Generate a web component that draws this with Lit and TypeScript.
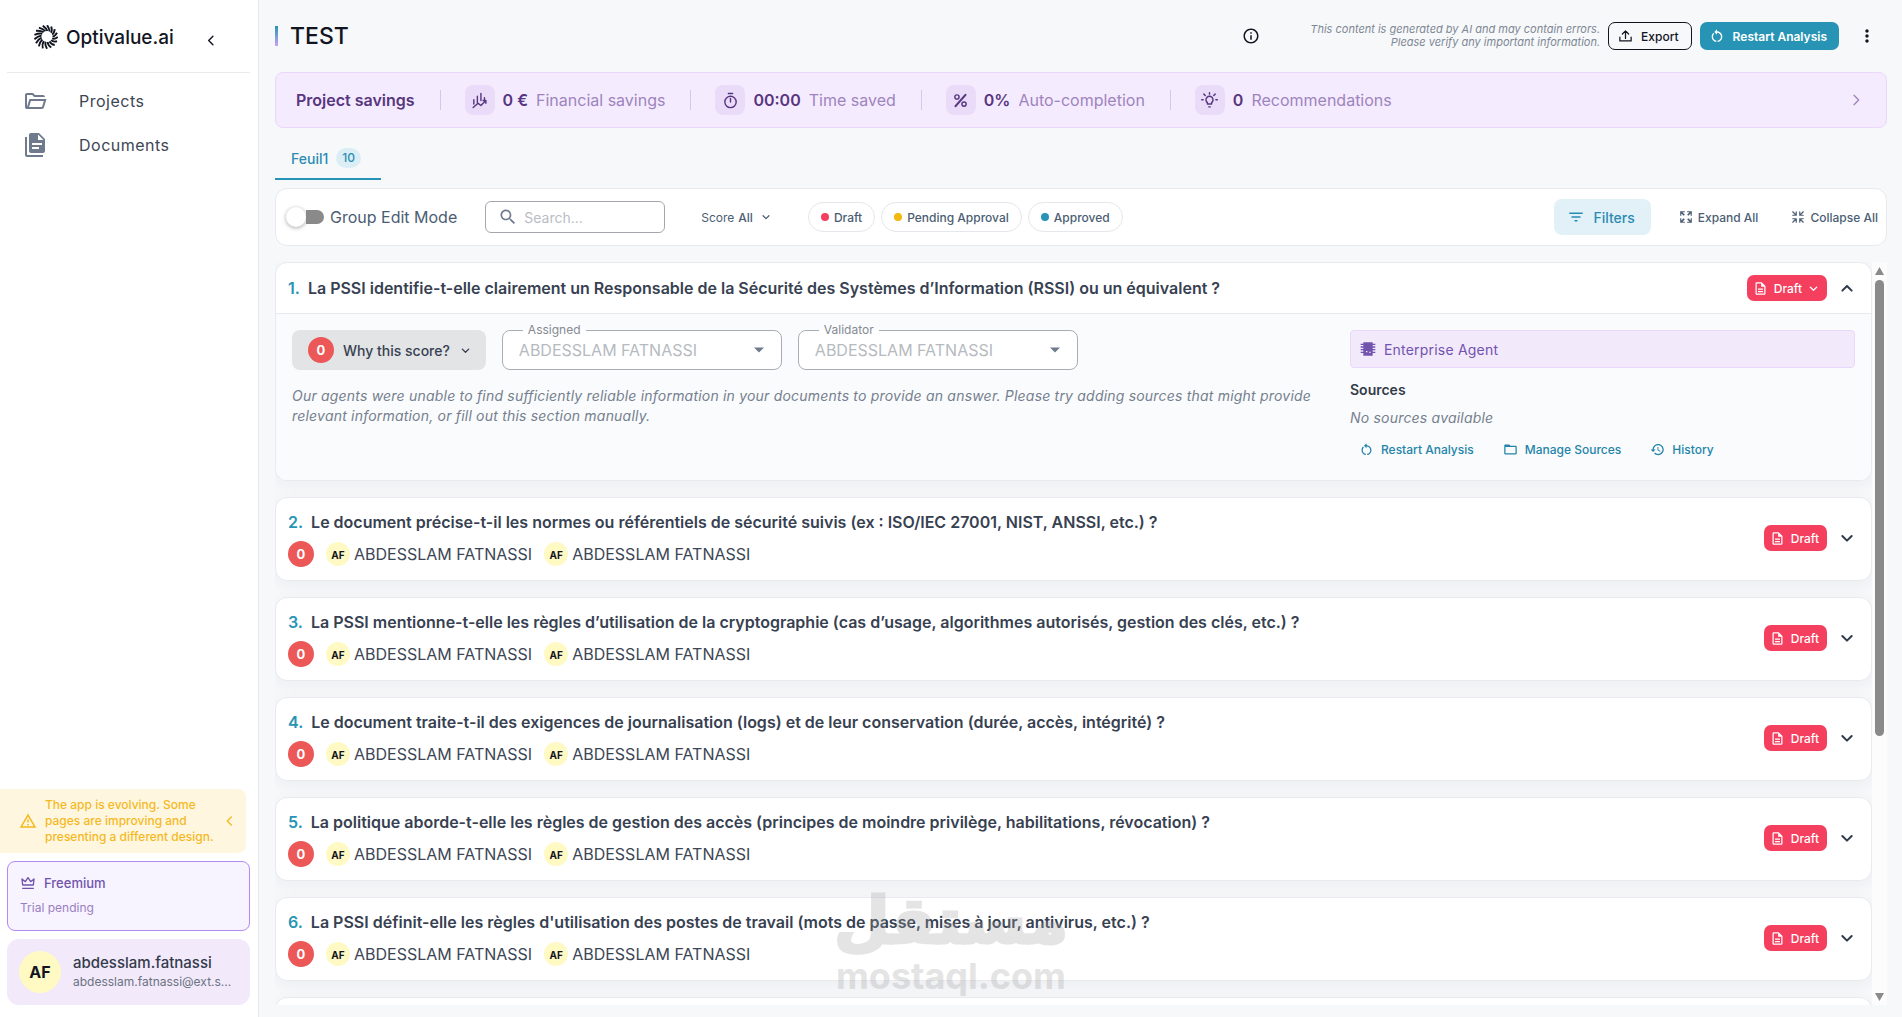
import { LitElement, html, svg, css, nothing } from "lit";
import { customElement, property, state } from "lit/decorators.js";

const filled = (d: string) => svg`<path d=${d} fill="currentColor" fill-rule="evenodd"></path>`;
const stroked = (d: string, w = 2) =>
  svg`<path d=${d} fill="none" stroke="currentColor" stroke-width=${w} stroke-linecap="round" stroke-linejoin="round"></path>`;

const ICONS: Record<string, unknown> = {
  folderOpen: filled(
    "M4 20q-.825 0-1.412-.587T2 18V6q0-.825.588-1.412T4 4h6l2 2h8q.825 0 1.413.588T22 8H11.175l-2-2H4v12l2.4-8h17.1l-2.575 8.575q-.2.65-.737 1.038T19 20zm2.1-2H19l1.8-6H7.9z"
  ),
  documents: filled(
    "M16 0H8C6.9 0 6 .9 6 2V18C6 19.1 6.9 20 8 20H20C21.1 20 22 19.1 22 18V6ZM19 12H9V10H19ZM16 16H9V14H16ZM15 7V1.5L20.5 7ZM4 4V22H20V24H4C2.9 24 2 23.1 2 22V4Z"
  ),
  warning: filled(
    "M12 5.99L19.53 19H4.47L12 5.99M12 2L1 21h22L12 2zm1 14h-2v2h2v-2zm0-6h-2v4h2v-4z"
  ),
  crown: stroked("M4 15 3 6l5 4 4-6 4 6 5-4-1 9zM4 20h16"),
  info: filled(
    "M11 7h2v2h-2zm0 4h2v6h-2zm1-9C6.48 2 2 6.48 2 12s4.48 10 10 10 10-4.48 10-10S17.52 2 12 2zm0 18c-4.41 0-8-3.59-8-8s3.59-8 8-8 8 3.59 8 8-3.59 8-8 8z"
  ),
  upload: stroked("M12 15V3M7 8l5-5 5 5M3 13v6h18v-6"),
  restart: filled(
    "M12 5V2L8 6l4 4V7c3.31 0 6 2.69 6 6 0 2.97-2.17 5.43-5 5.91v2.02c3.95-.49 7-3.85 7-7.93 0-4.42-3.58-8-8-8zm-6 8c0-1.65.67-3.15 1.76-4.24L6.34 7.34C4.9 8.79 4 10.79 4 13c0 4.08 3.05 7.44 7 7.93v-2.02c-2.83-.48-5-2.94-5-5.91z"
  ),
  more: filled(
    "M12 8c1.1 0 2-.9 2-2s-.9-2-2-2-2 .9-2 2 .9 2 2 2zm0 2c-1.1 0-2 .9-2 2s.9 2 2 2 2-.9 2-2-.9-2-2-2zm0 6c-1.1 0-2 .9-2 2s.9 2 2 2 2-.9 2-2-.9-2-2-2z"
  ),
  finance: stroked("M4 11v6M9 6v9M14 2v10M19 8v3M3 22l7-6 4 3 7-7M17 12h4v4", 2),
  timer: svg`${stroked("M9 2h6M12 9v5")}<circle cx="12" cy="14" r="8" fill="none" stroke="currentColor" stroke-width="2"></circle>`,
  percent: svg`${stroked("M19 4 5 20", 3)}<circle cx="7" cy="7" r="3" fill="none" stroke="currentColor" stroke-width="2"></circle><circle cx="17" cy="17" r="3" fill="none" stroke="currentColor" stroke-width="2"></circle>`,
  bulb: stroked("M9 17v-2a5 5 0 1 1 6 0v2zM11 21h2M12 1v2M4 3l2 2M20 3l-2 2M1 11h2M21 11h2", 2),
  search: filled(
    "M15.5 14h-.79l-.28-.27C15.41 12.59 16 11.11 16 9.5 16 5.91 13.09 3 9.5 3S3 5.91 3 9.5 5.91 16 9.5 16c1.61 0 3.09-.59 4.23-1.57l.27.28v.79l5 4.99L20.49 19l-4.99-5zm-6 0C7.01 14 5 11.99 5 9.5S7.01 5 9.5 5 14 7.01 14 9.5 11.99 14 9.5 14z"
  ),
  filter: filled("M10 18h4v-2h-4v2zM3 6v2h18V6H3zm3 7h12v-2H6v2z"),
  expand: filled(
    "M14 2h8v8h-2V6l-4 4-2-2 4-4h-4zM10 2v2H6l4 4-2 2-4-4v4H2V2zM2 14h2v4l4-4 2 2-4 4h4v2H2zM22 14v8h-8v-2h4l-4-4 2-2 4 4v-4z"
  ),
  collapse: stroked("M3 3l6 6M9 3v6H3M21 3l-6 6M15 3v6h6M3 21l6-6M9 21v-6H3M21 21l-6-6M15 21v-6h6", 2),
  doc: filled(
    "M8 16h8v2H8zm0-4h8v2H8zm6-10H6c-1.1 0-2 .9-2 2v16c0 1.1.89 2 1.99 2H18c1.1 0 2-.9 2-2V8l-6-6zm4 18H6V4h7v5h5v11z"
  ),
  chip: filled(
    "M5 2h14v2h4v2h-4v2h4v2h-4v2h4v2h-4v2h4v2h-4v4H5v-4H1v-2h4v-2H1v-2h4v-2H1V8h4V6H1V4h4zM9 15v2h2v-2zM14 16v2h2v-2z"
  ),
  folder: filled(
    "M20 6h-8l-2-2H4c-1.1 0-1.99.9-1.99 2L2 18c0 1.1.9 2 2 2h16c1.1 0 2-.9 2-2V8c0-1.1-.9-2-2-2zm0 12H4V8h16v10z"
  ),
  history: filled(
    "M13 3c-4.97 0-9 4.03-9 9H1l3.89 3.89.07.14L9 12H6c0-3.87 3.13-7 7-7s7 3.13 7 7-3.13 7-7 7c-1.93 0-3.68-.79-4.94-2.06l-1.42 1.42C8.27 19.99 10.51 21 13 21c4.97 0 9-4.03 9-9s-4.03-9-9-9zm-1 5v5l4.28 2.54.72-1.21-3.5-2.08V8H12z"
  ),
  left: stroked("M14 6l-6 6 6 6", 2),
  right: stroked("M9 5l7 7-7 7", 2),
  down: stroked("M5 9l7 7 7-7", 3),
  up: stroked("M5 16l7-7 7 7", 3),
  caret: filled("M6 9h12l-6 6z"),
};

const icon = (name: string, size: number) =>
  html`<svg class="icon" width=${size} height=${size} viewBox="0 0 24 24" aria-hidden="true">${ICONS[name]}</svg>`;

const shared = css`
  * {
    box-sizing: border-box;
  }
  button,
  input,
  select {
    font: inherit;
    color: inherit;
    margin: 0;
    border: 0;
    padding: 0;
    background: none;
  }
  .icon {
    display: block;
    flex: none;
  }
  .score {
    display: grid;
    place-items: center;
    flex: none;
    width: 26px;
    height: 26px;
    border-radius: 50%;
    background: #ec5757;
    color: #fff;
    font-size: 13px;
    font-weight: 700;
  }
`;

interface Question {
  id: number;
  title: string;
}

const QUESTIONS: Question[] = [
  { id: 1, title: "La PSSI identifie-t-elle clairement un Responsable de la Sécurité des Systèmes d’Information (RSSI) ou un équivalent ?" },
  { id: 2, title: "Le document précise-t-il les normes ou référentiels de sécurité suivis (ex : ISO/IEC 27001, NIST, ANSSI, etc.) ?" },
  { id: 3, title: "La PSSI mentionne-t-elle les règles d’utilisation de la cryptographie (cas d’usage, algorithmes autorisés, gestion des clés, etc.) ?" },
  { id: 4, title: "Le document traite-t-il des exigences de journalisation (logs) et de leur conservation (durée, accès, intégrité) ?" },
  { id: 5, title: "La politique aborde-t-elle les règles de gestion des accès (principes de moindre privilège, habilitations, révocation) ?" },
  { id: 6, title: "La PSSI définit-elle les règles d'utilisation des postes de travail (mots de passe, mises à jour, antivirus, etc.) ?" },
];

const USER = "ABDESSLAM FATNASSI";

@customElement("app-sidebar")
export class AppSidebar extends LitElement {
  static styles = [
    shared,
    css`
      :host {
        display: flex;
        flex-direction: column;
        background: #fff;
        border-right: 1px solid #e6e8ec;
        padding-bottom: 12px;
      }
      .brand {
        display: flex;
        align-items: center;
        gap: 8px;
        height: 73px;
        margin: 0 8px 0 7px;
        padding: 2px 30px 0 27px;
        border-bottom: 1px solid #e8eaed;
        color: #12151f;
        font-size: 19px;
        font-weight: 500;
      }
      .name {
        flex: 1;
      }
      .fold {
        color: #12151f;
        padding-top: 6px;
      }
      nav {
        flex: 1;
        padding-top: 6px;
      }
      nav a {
        display: flex;
        align-items: center;
        gap: 32px;
        height: 44px;
        padding-left: 23px;
        color: #3c4654;
        font-size: 16px;
        letter-spacing: 0.5px;
        text-decoration: none;
      }
      nav .icon {
        color: #6f7b8c;
      }
      .notice {
        display: flex;
        align-items: center;
        gap: 8px;
        margin: 0 12px 8px 0;
        padding: 8px 16px 8px 19px;
        border-radius: 0 8px 8px 0;
        background: #fef6df;
        color: #f5b91f;
        font-size: 12px;
        line-height: 16px;
        font-weight: 500;
      }
      .notice p {
        flex: 1;
        margin: 0;
        white-space: nowrap;
      }
      .plan {
        display: flex;
        flex-direction: column;
        gap: 8px;
        margin: 0 8px 8px 7px;
        padding: 13px 12px;
        border: 1px solid #b18bf3;
        border-radius: 8px;
        background: #f7f3ff;
        color: #9a7fbf;
        font-size: 12px;
        line-height: 18px;
      }
      .tier {
        display: flex;
        align-items: center;
        gap: 8px;
        color: #7153ae;
        font-size: 13px;
        line-height: 16px;
        font-weight: 500;
      }
      .user {
        display: flex;
        align-items: center;
        gap: 12px;
        height: 66px;
        margin: 0 8px 0 7px;
        padding: 0 12px;
        border-radius: 12px;
        background: #f2e9fb;
        text-align: left;
      }
      .avatar {
        display: grid;
        place-items: center;
        flex: none;
        width: 42px;
        height: 42px;
        border-radius: 50%;
        background: #fff9c4;
        color: #12151f;
        font-size: 16px;
        font-weight: 700;
      }
      .who {
        min-width: 0;
        color: #6b7280;
        font-size: 12px;
        line-height: 18px;
      }
      .who b {
        display: block;
        color: #333b4a;
        font-size: 15px;
        line-height: 20px;
        font-weight: 500;
      }
      .mail {
        display: block;
        overflow: hidden;
        text-overflow: ellipsis;
        white-space: nowrap;
      }
    `,
  ];

  private rays() {
    const count = 17;
    return Array.from({ length: count }, (_, i) => {
      const a = (i / count) * Math.PI * 2;
      const at = (cx: number, cy: number, r: number, t: number) =>
        `${(cx + r * Math.cos(a + t)).toFixed(2)} ${(cy + r * Math.sin(a + t)).toFixed(2)}`;
      const d = `M${at(13, 11.5, 5.5, 0.35)}Q${at(12.5, 12, 8.5, 0.3)} ${at(12, 12, 11.8, 0)}`;
      return svg`<path d=${d} fill="none" stroke="currentColor" stroke-width="1.9"></path>`;
    });
  }

  render() {
    return html`
      <div class="brand">
        <svg class="icon" width="24" height="24" viewBox="0 0 24 24" aria-hidden="true">${this.rays()}</svg>
        <span class="name">Optivalue.ai</span>
        <button class="fold" aria-label="Collapse menu">${icon("left", 17)}</button>
      </div>
      <nav>
        <a href="#projects">${icon("folderOpen", 24)}Projects</a>
        <a href="#documents">${icon("documents", 24)}Documents</a>
      </nav>
      <div class="notice">
        ${icon("warning", 18)}
        <p>The app is evolving. Some<br />pages are improving and<br />presenting a different design.</p>
        <button aria-label="Hide notice">${icon("left", 16)}</button>
      </div>
      <div class="plan">
        <div class="tier">${icon("crown", 16)}Freemium</div>
        <div>Trial pending</div>
      </div>
      <button class="user">
        <span class="avatar">AF</span>
        <span class="who"><b>abdesslam.fatnassi</b><span class="mail">abdesslam.fatnassi@ext.s...</span></span>
      </button>
    `;
  }
}

@customElement("question-card")
export class QuestionCard extends LitElement {
  @property({ attribute: false }) question?: Question;
  @property({ type: Boolean }) open = false;

  static styles = [
    shared,
    css`
      :host {
        display: block;
        flex: none;
        min-height: 84px;
        border: 1px solid #e8eaee;
        border-radius: 12px;
        background: #fff;
        box-shadow: 0 4px 16px rgba(30, 41, 59, 0.05);
        overflow: hidden;
      }
      .head {
        display: flex;
        align-items: center;
        gap: 12px;
        padding: 12px 16px 12px 12px;
      }
      .closed {
        min-height: 82px;
        padding: 8px 16px 10px 12px;
      }
      .main {
        flex: 1;
      }
      h2 {
        display: flex;
        gap: 8px;
        margin: 0;
        color: #374151;
        font-size: 16px;
        line-height: 26px;
        font-weight: 600;
      }
      .num {
        color: #2794b5;
      }
      .people {
        display: flex;
        align-items: center;
        gap: 12px;
        margin-top: 6px;
        color: #3c4654;
        font-size: 16px;
        line-height: 26px;
      }
      .person {
        display: flex;
        align-items: center;
        gap: 4px;
      }
      .avatar {
        display: grid;
        place-items: center;
        width: 24px;
        height: 24px;
        border-radius: 50%;
        background: #fff9c4;
        color: #12151f;
        font-size: 10px;
        font-weight: 700;
      }
      .status {
        display: flex;
        align-items: center;
        gap: 6px;
        height: 26px;
        padding: 0 8px 0 6px;
        border-radius: 7px;
        background: #f43f5e;
        color: #fff;
        font-size: 12px;
        font-weight: 500;
      }
      .toggle {
        color: #2f3b4c;
      }
      .body {
        display: grid;
        grid-template-columns: repeat(12, 1fr);
        gap: 24px;
        padding: 16px;
        border-top: 1px solid #e8eaee;
        background: #fafbfd;
      }
      .answer {
        grid-column: span 8;
      }
      .aside {
        grid-column: span 4;
        min-height: 134px;
      }
      .controls {
        display: flex;
        gap: 16px;
      }
      .why {
        display: flex;
        align-items: center;
        gap: 9px;
        height: 40px;
        padding: 0 14px 0 16px;
        border-radius: 8px;
        background: #e2e4e6;
        color: #374151;
        font-size: 14px;
        font-weight: 500;
      }
      .why .icon {
        margin: 0 1px;
      }
      .field {
        position: relative;
        display: flex;
        align-items: center;
        flex: 0 1 280px;
        height: 40px;
        padding: 0 12px 0 16px;
        border: 1px solid #a9adb3;
        border-radius: 8px;
        background: #fff;
        color: #6f7b8c;
      }
      .field label {
        position: absolute;
        top: -9px;
        left: 20px;
        padding: 0 5px;
        background: linear-gradient(#fafbfd 50%, #fff 50%);
        color: #858a92;
        font-size: 12px;
        line-height: 16px;
      }
      .field select {
        flex: 1;
        appearance: none;
        color: #b6babf;
        opacity: 1;
        font-size: 16px;
      }
      .answer p {
        margin: 16px 0 0;
        color: #75808e;
        font-size: 14px;
        line-height: 20px;
        font-style: italic;
        letter-spacing: 0.2px;
      }
      .agent {
        display: flex;
        align-items: center;
        gap: 8px;
        height: 38px;
        padding: 0 9px;
        border: 1px solid #e9d8fb;
        border-radius: 4px;
        background: #f2e9fb;
        color: #7153ae;
        font-size: 14px;
        letter-spacing: 0.2px;
      }
      h3 {
        margin: 12px 0 8px;
        color: #333b4a;
        font-size: 14px;
        line-height: 20px;
        font-weight: 600;
      }
      .none {
        color: #75808e;
        font-size: 14px;
        line-height: 20px;
        font-style: italic;
        letter-spacing: 0.2px;
      }
      .links {
        display: flex;
        gap: 29px;
        margin-top: 9px;
        padding-left: 9px;
      }
      .links button {
        display: flex;
        align-items: center;
        gap: 7px;
        height: 24px;
        color: #2384a9;
        font-size: 12px;
        font-weight: 500;
      }
    `,
  ];

  private field(label: string) {
    const id = label.toLowerCase();
    return html`<div class="field">
      <label for=${id}>${label}</label>
      <select id=${id} disabled>
        <option>${USER}</option>
      </select>
      ${icon("caret", 20)}
    </div>`;
  }

  private body() {
    return html`<div class="body">
      <div class="answer">
        <div class="controls">
          <button class="why"><span class="score">0</span>Why this score? ${icon("down", 11)}</button>
          ${this.field("Assigned")} ${this.field("Validator")}
        </div>
        <p>
          Our agents were unable to find sufficiently reliable information in your documents to provide an answer. Please
          try adding sources that might provide relevant information, or fill out this section manually.
        </p>
      </div>
      <div class="aside">
        <div class="agent">${icon("chip", 16)}Enterprise Agent</div>
        <h3>Sources</h3>
        <div class="none">No sources available</div>
        <div class="links">
          <button>${icon("restart", 15)}Restart Analysis</button>
          <button>${icon("folder", 15)}Manage Sources</button>
          <button>${icon("history", 15)}History</button>
        </div>
      </div>
    </div>`;
  }

  render() {
    const q = this.question;
    if (!q) return nothing;
    const person = html`<span class="person"><span class="avatar">AF</span>${USER}</span>`;
    return html`
      <div class="head ${this.open ? "" : "closed"}">
        <div class="main">
          <h2><span class="num">${q.id}.</span>${q.title}</h2>
          ${this.open ? nothing : html`<div class="people"><span class="score">0</span>${person}${person}</div>`}
        </div>
        <button class="status">${icon("doc", 15)}Draft${this.open ? icon("down", 11) : nothing}</button>
        <button
          class="toggle"
          aria-label=${this.open ? "Collapse question" : "Expand question"}
          @click=${() => (this.open = !this.open)}
        >
          ${icon(this.open ? "up" : "down", 16)}
        </button>
      </div>
      ${this.open ? this.body() : nothing}
    `;
  }
}

@customElement("app-root")
export class AppRoot extends LitElement {
  @state() private groupEdit = false;

  static styles = [
    shared,
    css`
      :host {
        display: grid;
        grid-template-columns: 259px minmax(0, 1fr);
        height: 100vh;
        overflow: hidden;
        background: #f7f8fa;
        font-family: Inter, "Liberation Sans", sans-serif;
        color: #374151;
      }
      main {
        display: flex;
        flex-direction: column;
        min-height: 0;
        padding: 0 15px 12px 16px;
      }
      header {
        display: flex;
        align-items: center;
        flex: none;
        height: 72px;
      }
      .accent {
        width: 3px;
        height: 20px;
        margin-right: 12px;
        background: linear-gradient(#2794b5, #c9a2f8);
      }
      h1 {
        flex: 1;
        margin: 0;
        color: #12151f;
        font-size: 23px;
        line-height: 32px;
        font-weight: 500;
      }
      .plain {
        color: #12151f;
      }
      .disclaimer {
        margin: 0 8px 0 50px;
        color: #7d8794;
        font-size: 11px;
        line-height: 13px;
        font-style: italic;
        text-align: right;
      }
      .btn {
        display: flex;
        align-items: center;
        gap: 8px;
        height: 28px;
        padding: 0 12px 0 9px;
        border-radius: 7px;
        font-size: 12px;
        font-weight: 500;
      }
      .export {
        margin-right: 8px;
        border: 1px solid #12151f;
        color: #12151f;
      }
      .restart {
        margin-right: 18px;
        background: #2794b5;
        color: #fff;
        font-weight: 600;
      }
      .kebab {
        margin-right: 10px;
      }
      .savings {
        display: flex;
        align-items: center;
        flex: none;
        height: 56px;
        padding: 0 22px 0 20px;
        border: 1px solid #e9d8fb;
        border-radius: 8px;
        background: #f5ebfe;
        color: #9d84bd;
        font-size: 16px;
      }
      .savings b {
        color: #57367f;
        font-weight: 600;
      }
      .metric {
        display: flex;
        align-items: center;
        gap: 8px;
        margin-left: 25px;
      }
      .metric::before {
        content: "";
        width: 1px;
        height: 20px;
        margin-right: 16px;
        background: #d8c6ec;
      }
      .tile {
        display: grid;
        place-items: center;
        width: 30px;
        height: 30px;
        border-radius: 8px;
        background: #eadcf9;
        color: #57367f;
      }
      .more {
        margin-left: auto;
      }
      .tabs {
        display: flex;
        flex: none;
        height: 52px;
        margin-bottom: 8px;
      }
      .tab {
        display: flex;
        align-items: center;
        gap: 8px;
        padding: 10px 20px 0 16px;
        border-bottom: 2px solid #2794b5;
        color: #2b8cb3;
        font-size: 14px;
        font-weight: 500;
      }
      .count {
        padding: 0 6px;
        border-radius: 10px;
        background: #dceef5;
        font-size: 12px;
        line-height: 20px;
      }
      .toolbar {
        display: flex;
        align-items: center;
        flex: none;
        height: 58px;
        margin-bottom: 16px;
        padding: 0 8px 0 10px;
        border: 1px solid #e8eaee;
        border-radius: 12px;
        background: #fff;
        color: #4b5d73;
        font-size: 12px;
      }
      .group {
        display: flex;
        align-items: center;
        gap: 6px;
        margin-right: 28px;
        font-size: 16px;
      }
      .switch {
        appearance: none;
        display: flex;
        align-items: center;
        width: 38px;
        height: 20px;
      }
      .switch::before {
        content: "";
        width: 20px;
        height: 20px;
        border-radius: 50%;
        background: #fff;
        box-shadow: 0 1px 4px rgba(0, 0, 0, 0.35);
      }
      .switch::after {
        content: "";
        width: 18px;
        height: 14px;
        border-radius: 0 7px 7px 0;
        background: #8a8a8a;
      }
      .switch:checked::before {
        order: 1;
      }
      .switch:checked::after {
        border-radius: 7px 0 0 7px;
      }
      .search {
        display: flex;
        align-items: center;
        gap: 6px;
        width: 180px;
        height: 32px;
        margin-right: 36px;
        padding: 0 12px;
        border: 1px solid #a4a8ae;
        border-radius: 6px;
        color: #6f7b8c;
      }
      .search input {
        flex: 1;
        min-width: 0;
        outline: 0;
        font-size: 14px;
      }
      .search input::placeholder {
        color: #b9bdc3;
      }
      .scoresel {
        display: flex;
        align-items: center;
        gap: 4px;
        margin-right: 37px;
      }
      .scoresel b {
        margin-right: 4px;
        font-weight: 500;
      }
      .pill {
        display: flex;
        align-items: center;
        gap: 5px;
        height: 30px;
        margin-right: 6px;
        padding: 0 12px;
        border: 1px solid #e4e7eb;
        border-radius: 15px;
        background: #fff;
        font-weight: 500;
      }
      .dot {
        width: 8px;
        height: 8px;
        border-radius: 50%;
      }
      .draft {
        background: #f43f5e;
      }
      .pending {
        background: #f0b90b;
      }
      .approved {
        background: #2794b5;
      }
      .filters {
        display: flex;
        align-items: center;
        gap: 8px;
        height: 36px;
        margin: 0 28px 0 auto;
        padding: 0 16px 0 13px;
        border-radius: 8px;
        background: #e2f1f7;
        color: #2b8cb3;
        font-size: 14px;
        font-weight: 500;
      }
      .action {
        display: flex;
        align-items: center;
        gap: 5px;
        font-weight: 500;
      }
      .action + .action {
        margin-left: 33px;
      }
      .scroller {
        display: flex;
        flex: 1;
        min-height: 0;
      }
      .list {
        display: flex;
        flex: 1;
        flex-direction: column;
        gap: 16px;
        overflow-y: auto;
        scrollbar-width: none;
      }
      .bar {
        display: flex;
        flex-direction: column;
        align-items: center;
        width: 15px;
        padding: 5px 0 4px;
        background: #fcfcfc;
        color: #8a8a8a;
      }
      .thumb {
        width: 9px;
        flex: 457 0 0;
        margin-top: 5px;
        border-radius: 5px;
        background: #8a8a8a;
      }
      .rest {
        flex: 258 0 0;
      }
      .watermark {
        position: absolute;
        left: 50%;
        bottom: 20px;
        transform: translateX(-50%);
        display: flex;
        flex-direction: column;
        align-items: center;
        color: #a0a0a0;
        font-weight: 700;
        opacity: 0.28;
        pointer-events: none;
      }
      .arabic {
        font-family: "DejaVu Sans", sans-serif;
        font-size: 64px;
        line-height: 68px;
        -webkit-text-stroke: 3px #a0a0a0;
        stroke-linejoin: round;
      }
      .latin {
        font-size: 36px;
        line-height: 42px;
      }
    `,
  ];

  private metric(name: string, value: string, label: string) {
    return html`<div class="metric"><span class="tile">${icon(name, 17)}</span><b>${value}</b><span>${label}</span></div>`;
  }

  private pill(kind: string, label: string) {
    return html`<button class="pill"><span class="dot ${kind}"></span>${label}</button>`;
  }

  render() {
    return html`
      <app-sidebar></app-sidebar>
      <main>
        <header>
          <span class="accent"></span>
          <h1>TEST</h1>
          <button class="plain" aria-label="Information">${icon("info", 18)}</button>
          <p class="disclaimer">
            This content is generated by AI and may contain errors.<br />Please verify any important information.
          </p>
          <button class="btn export">${icon("upload", 15)}Export</button>
          <button class="btn restart">${icon("restart", 16)}Restart Analysis</button>
          <button class="plain kebab" aria-label="More options">${icon("more", 20)}</button>
        </header>
        <section class="savings">
          <b>Project savings</b>
          ${this.metric("finance", "0 €", "Financial savings")} ${this.metric("timer", "00:00", "Time saved")}
          ${this.metric("percent", "0%", "Auto-completion")} ${this.metric("bulb", "0", "Recommendations")}
          <button class="more" aria-label="Show savings">${icon("right", 16)}</button>
        </section>
        <div class="tabs"><button class="tab">Feuil1<span class="count">10</span></button></div>
        <section class="toolbar">
          <label class="group"
            ><input
              class="switch"
              type="checkbox"
              role="switch"
              .checked=${this.groupEdit}
              @change=${() => (this.groupEdit = !this.groupEdit)}
            />Group Edit Mode</label
          >
          <label class="search">${icon("search", 20)}<input type="text" aria-label="Search" placeholder="Search..." /></label>
          <button class="scoresel">Score <b>All</b> ${icon("down", 10)}</button>
          ${this.pill("draft", "Draft")}${this.pill("pending", "Pending Approval")}${this.pill("approved", "Approved")}
          <button class="filters">${icon("filter", 18)}Filters</button>
          <button class="action">${icon("expand", 14)}Expand All</button>
          <button class="action">${icon("collapse", 14)}Collapse All</button>
        </section>
        <div class="scroller">
          <div class="list">
            ${QUESTIONS.map((q) => html`<question-card .question=${q} ?open=${q.id === 1}></question-card>`)}
            <question-card></question-card>
          </div>
          <div class="bar" aria-hidden="true">
            <svg class="icon" width="9" height="8" viewBox="0 0 9 8"><path d="M4.5 0 9 8H0z" fill="currentColor"></path></svg>
            <span class="thumb"></span><span class="rest"></span>
            <svg class="icon" width="9" height="8" viewBox="0 0 9 8"><path d="M0 0h9L4.5 8z" fill="currentColor"></path></svg>
          </div>
        </div>
      </main>
      <div class="watermark"><span class="arabic" lang="ar">مستقل</span><span class="latin">mostaql.com</span></div>
    `;
  }
}
